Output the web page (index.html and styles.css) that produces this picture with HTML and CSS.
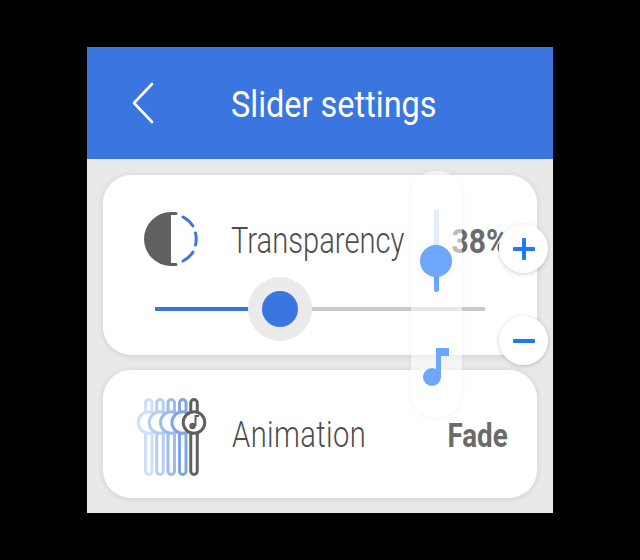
FILE: index.html
```html
<!DOCTYPE html>
<html>
  <head>
    <meta charset="utf-8">
    <title>Slider settings</title>
    <link rel="stylesheet" href="styles.css">
  </head>

  <body>
    <div class="watch">
      <header class="top-bar">
        <svg class="back-icon" width="26" height="44" viewBox="0 0 26 44">
          <path d="M21 3 L3 22 L21 41" fill="none" stroke="#fff" stroke-width="2.6" stroke-linecap="round" stroke-linejoin="round"/>
        </svg>
        <h1 class="title">Slider settings</h1>
      </header>

      <main class="content">
        <section class="card card-transparency">
          <div class="row">
            <svg class="row-icon" width="56" height="56" viewBox="0 0 56 56">
              <path d="M28 1 A27 27 0 0 0 28 55 Z" fill="#606060"/>
              <path d="M28 2.500 H33 M28 53.500 H33" fill="none" stroke="#606060" stroke-width="3" stroke-linecap="round"/>
              <path d="M40 6 A25.500 25.500 0 0 1 50 15 M52.500 22 A25.500 25.500 0 0 1 52.500 34 M50 41 A25.500 25.500 0 0 1 40 50" fill="none" stroke="#3a75e0" stroke-width="3" stroke-linecap="round"/>
            </svg>
            <span class="label">Transparency</span>
            <span class="value value-percent">38%</span>
          </div>
          <div class="slider">
            <div class="slider-fill"></div>
            <div class="slider-rest"></div>
            <div class="slider-halo"><div class="slider-knob"></div></div>
          </div>
        </section>

        <section class="card card-animation">
          <div class="row">
            <svg class="row-icon" width="76" height="88" viewBox="0 0 76 88" fill="none" stroke-width="3">
              <g stroke="#d0dff8">
                <rect x="13.500" y="9.500" width="6.500" height="75" rx="3.250" fill="#fff"/>
                <circle cx="17" cy="32.500" r="10.800" fill="#fff"/>
              </g>
              <g stroke="#b7cdf4">
                <rect x="24.750" y="9.500" width="6.500" height="75" rx="3.250" fill="#fff"/>
                <circle cx="28" cy="32.500" r="10.800" fill="#fff"/>
              </g>
              <g stroke="#9cbbf0">
                <rect x="36" y="9.500" width="6.500" height="75" rx="3.250" fill="#fff"/>
                <circle cx="39.300" cy="32.500" r="10.800" fill="#fff"/>
              </g>
              <g stroke="#7fa5ea">
                <rect x="47.500" y="9.500" width="6.500" height="75" rx="3.250" fill="#fff"/>
                <circle cx="50.700" cy="32.500" r="10.800" fill="#fff"/>
              </g>
              <g stroke="#606060">
                <rect x="58.750" y="9.500" width="6.500" height="75" rx="3.250" fill="#fff"/>
                <circle cx="62" cy="32.500" r="10.800" fill="#fff"/>
              </g>
              <path d="M67 26 H63.500 V36" stroke="#606060" stroke-width="2"/>
              <circle cx="60.500" cy="36" r="3.200" fill="#606060"/>
            </svg>
            <span class="label label-wide">Animation</span>
            <span class="value">Fade</span>
          </div>
        </section>
      </main>

      <!-- floating controls sit over the cards -->
      <div class="side-panel">
        <div class="mini-slider">
          <div class="mini-top"></div>
          <div class="mini-bottom"></div>
          <div class="mini-knob"></div>
        </div>
        <svg class="note-icon" width="28" height="40" viewBox="0 0 28 40">
          <path d="M13 0 H26 V8 H18 V30 H13 Z" fill="#6ea6fb"/>
          <circle cx="9" cy="29" r="9" fill="#6ea6fb"/>
        </svg>
      </div>
      <button class="round-btn btn-plus">
        <svg width="22" height="22" viewBox="0 0 22 22">
          <path d="M1.500 11 H20.500 M11 1.500 V20.500" stroke="#1f78f5" stroke-width="4" stroke-linecap="round"/>
        </svg>
      </button>
      <button class="round-btn btn-minus">
        <svg width="22" height="22" viewBox="0 0 22 22">
          <path d="M1.500 11 H20.500" stroke="#1f78f5" stroke-width="4" stroke-linecap="round"/>
        </svg>
      </button>
    </div>
  </body>
</html>
```

FILE: styles.css
```css
html, body {
  margin: 0;
  height: 100%;
  overflow: hidden;
  background-color: #000;
  font-family: Roboto, "Liberation Sans", sans-serif;
}

.watch {
  position: relative;
  width: 466px;
  height: 466px;
  margin: 47px 0 0 87px;
  background-color: #e9e9e9;
  overflow: hidden;
}

.top-bar {
  display: flex;
  align-items: center;
  height: 112px;
  padding-left: 44px;
  background-color: #3a75e0;
  color: white;
  box-sizing: border-box;
}

.back-icon {
  flex: none;
}

.title {
  margin: 3px 0 0 74px;
  font-size: 37px;
  font-weight: 400;
  white-space: nowrap;
  transform: scaleX(0.877);
  transform-origin: left center;
}

.content {
  display: flex;
  flex-direction: column;
  gap: 15px;
  padding: 16px 16px 0;
}

.card {
  background-color: white;
  border-radius: 28px;
  box-shadow: 0 1px 6px rgba(0, 0, 0, 0.12);
}

.card-transparency {
  height: 180px;
  padding-top: 30px;
  box-sizing: border-box;
}

.card-animation {
  height: 128px;
}

.row {
  position: relative;
  display: flex;
  align-items: center;
}

.card-transparency .row {
  height: 72px;
  padding-left: 40px;
}

.card-animation .row {
  height: 130px;
  padding-left: 29px;
}

.card-transparency .row-icon {
  margin-bottom: 4px;
}

.card-animation .row-icon {
  margin-bottom: 2px;
}

.label {
  color: #4d4d4d;
  font-size: 36px;
  font-weight: 300;
  white-space: nowrap;
  transform: scaleX(0.81);
  transform-origin: left center;
}

.label-wide {
  letter-spacing: 0.5px;
}

.card-transparency .label {
  margin-left: 32px;
}

.card-animation .label {
  margin-left: 24px;
}

.value {
  position: absolute;
  right: 29px;
  color: #6b6b6b;
  font-size: 33px;
  font-weight: 700;
  transform: scaleX(0.84);
  transform-origin: right center;
}

.value-percent {
  transform: scaleX(0.91);
}

.slider {
  position: relative;
  display: flex;
  align-items: center;
  height: 64px;
  margin: 0 52px;
}

.slider-fill {
  width: 125px;
  height: 4px;
  background-color: #3a75e0;
}

.slider-rest {
  flex: 1;
  height: 4px;
  background-color: #c9c9c9;
}

.slider-halo {
  position: absolute;
  left: 93px;
  top: 0;
  display: flex;
  align-items: center;
  justify-content: center;
  width: 64px;
  height: 64px;
  border-radius: 50%;
  background-color: #ebebeb;
}

.slider-knob {
  width: 36px;
  height: 36px;
  border-radius: 50%;
  background-color: #3a75e0;
}

.side-panel {
  position: absolute;
  left: 324px;
  top: 124px;
  display: flex;
  flex-direction: column;
  align-items: center;
  width: 51px;
  height: 246px;
  border-radius: 24px;
  background-color: rgba(255, 255, 255, 0.55);
  box-shadow: 0 1px 6px rgba(0, 0, 0, 0.05);
}

.mini-slider {
  position: relative;
  width: 5px;
  height: 83px;
  margin-top: 38px;
}

.mini-top {
  height: 52px;
  border-radius: 2px 2px 0 0;
  background-color: #e1ecfd;
}

.mini-bottom {
  height: 31px;
  border-radius: 0 0 2px 2px;
  background-color: #6ea6fb;
}

.mini-knob {
  position: absolute;
  left: -14px;
  top: 36px;
  width: 32px;
  height: 32px;
  border-radius: 50%;
  background-color: #6ea6fb;
  box-shadow: 0 2px 8px rgba(0, 0, 0, 0.08);
}

.note-icon {
  margin-top: 56px;
  margin-left: 1px;
}

.round-btn {
  position: absolute;
  left: 412px;
  display: flex;
  align-items: center;
  justify-content: center;
  width: 49px;
  height: 49px;
  padding: 0;
  border: none;
  border-radius: 50%;
  background-color: white;
  box-shadow: 0 1px 4px rgba(0, 0, 0, 0.2);
}

.btn-plus {
  top: 177px;
}

.btn-minus {
  top: 269px;
}
```
